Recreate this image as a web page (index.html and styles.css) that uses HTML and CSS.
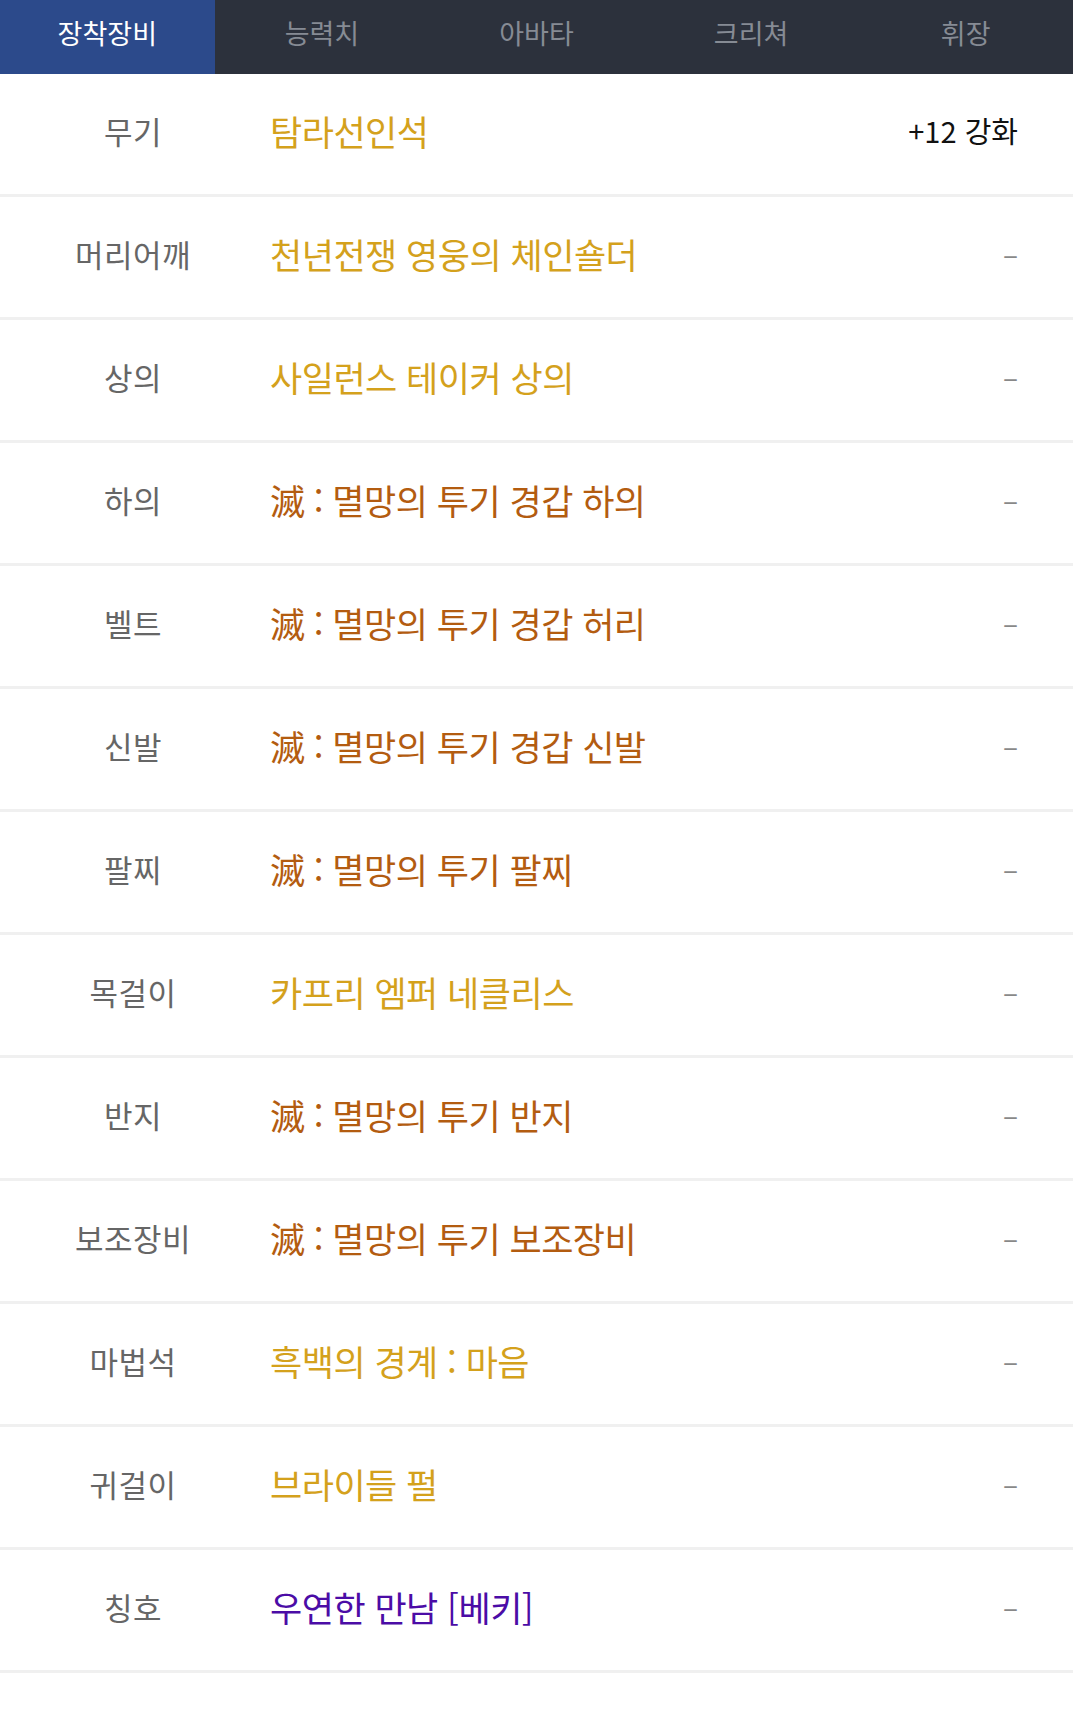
FILE: index.html
```html
<!DOCTYPE html>
<html lang="ko">
<head>
  <meta charset="UTF-8">
  <meta name="viewport" content="width=device-width, initial-scale=1.0">
  <title>장착장비</title>
  <link rel="stylesheet" href="styles.css">
</head>
<body>
  <nav class="tabs">
    <a class="tab active">장착장비</a>
    <a class="tab">능력치</a>
    <a class="tab">아바타</a>
    <a class="tab">크리쳐</a>
    <a class="tab">휘장</a>
  </nav>

  <ul class="equip-list">
    <li class="equip-row">
      <span class="slot">무기</span>
      <span class="item unique">탐라선인석</span>
      <span class="upgrade strong">+12 강화</span>
    </li>
    <li class="equip-row">
      <span class="slot">머리어깨</span>
      <span class="item unique">천년전쟁 영웅의 체인숄더</span>
      <span class="upgrade">–</span>
    </li>
    <li class="equip-row">
      <span class="slot">상의</span>
      <span class="item unique">사일런스 테이커 상의</span>
      <span class="upgrade">–</span>
    </li>
    <li class="equip-row">
      <span class="slot">하의</span>
      <span class="item epic">滅 : 멸망의 투기 경갑 하의</span>
      <span class="upgrade">–</span>
    </li>
    <li class="equip-row">
      <span class="slot">벨트</span>
      <span class="item epic">滅 : 멸망의 투기 경갑 허리</span>
      <span class="upgrade">–</span>
    </li>
    <li class="equip-row">
      <span class="slot">신발</span>
      <span class="item epic">滅 : 멸망의 투기 경갑 신발</span>
      <span class="upgrade">–</span>
    </li>
    <li class="equip-row">
      <span class="slot">팔찌</span>
      <span class="item epic">滅 : 멸망의 투기 팔찌</span>
      <span class="upgrade">–</span>
    </li>
    <li class="equip-row">
      <span class="slot">목걸이</span>
      <span class="item unique">카프리 엠퍼 네클리스</span>
      <span class="upgrade">–</span>
    </li>
    <li class="equip-row">
      <span class="slot">반지</span>
      <span class="item epic">滅 : 멸망의 투기 반지</span>
      <span class="upgrade">–</span>
    </li>
    <li class="equip-row">
      <span class="slot">보조장비</span>
      <span class="item epic">滅 : 멸망의 투기 보조장비</span>
      <span class="upgrade">–</span>
    </li>
    <li class="equip-row">
      <span class="slot">마법석</span>
      <span class="item unique">흑백의 경계 : 마음</span>
      <span class="upgrade">–</span>
    </li>
    <li class="equip-row">
      <span class="slot">귀걸이</span>
      <span class="item unique">브라이들 펄</span>
      <span class="upgrade">–</span>
    </li>
    <li class="equip-row">
      <span class="slot">칭호</span>
      <span class="item rare">우연한 만남 [베키]</span>
      <span class="upgrade">–</span>
    </li>
  </ul>
</body>
</html>
```

FILE: styles.css
```css
body {
  margin: 0;
  background: #fff;
  font-family: "Noto Sans CJK KR", "Noto Sans", sans-serif;
}

.tabs {
  display: flex;
  height: 74px;
  background-color: #2c313c;
}

.tab {
  flex: 1;
  display: flex;
  align-items: center;
  justify-content: center;
  padding-bottom: 10px;
  font-size: 27px;
  color: #868b94;
}

.tab.active {
  background-color: #2c4a8b;
  color: #fff;
}

.equip-list {
  list-style: none;
  margin: 0;
  padding: 0;
}

.equip-row {
  display: flex;
  align-items: center;
  height: 112px;
  padding-bottom: 8px;
  border-bottom: 3px solid #f0f0f0;
}

.slot {
  width: 266px;
  text-align: center;
  font-size: 31px;
  letter-spacing: 0.5px;
  color: #666;
}

.item {
  flex: 1;
  padding-left: 4px;
  font-size: 35px;
  letter-spacing: -0.5px;
}

/* item rarity colours */
.item.unique {
  color: #d4a11c;
}

.item.epic {
  color: #b35c10;
}

.item.rare {
  color: #4b0ca6;
}

.upgrade {
  padding-right: 55px;
  text-align: right;
  font-size: 28px;
  color: #888;
}

.upgrade.strong {
  font-size: 29px;
  color: #111;
}
```
